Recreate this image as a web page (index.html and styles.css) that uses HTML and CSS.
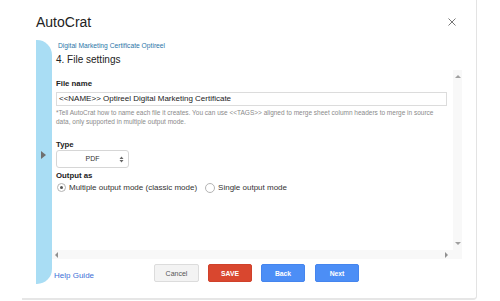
FILE: index.html
```html
<!DOCTYPE html>
<html>
<head>
<meta charset="utf-8">
<link rel="stylesheet" href="styles.css">
</head>
<body>
<div class="dialog">
  <header class="top">
    <h1 class="title">AutoCrat</h1>
    <svg class="close" width="8" height="8" viewBox="0 0 8 8"><path d="M0.5 0.5L7.5 7.5M7.5 0.5L0.5 7.5" stroke="#777" stroke-width="1"/></svg>
  </header>
  <div class="body">
    <aside class="rail"><span class="rail-arrow"></span></aside>
    <main class="panel">
      <div class="crumb">Digital Marketing Certificate Optireel</div>
      <h2 class="step">4. File settings</h2>
      <div class="scroller">
        <div class="scroll-row">
          <div class="content">
            <div class="label">File name</div>
            <div class="input">&lt;&lt;NAME&gt;&gt; Optireel Digital Marketing Certificate</div>
            <p class="help">*Tell AutoCrat how to name each file it creates. You can use &lt;&lt;TAGS&gt;&gt; aligned to merge sheet column headers to merge in source data, only supported in multiple output mode.</p>
            <div class="label label-type">Type</div>
            <div class="select"><span class="select-val">PDF</span><svg class="select-arrows" width="5" height="7" viewBox="0 0 5 7"><path d="M0.5 3L2.5 0.5L4.5 3Z M0.5 4L2.5 6.5L4.5 4Z" fill="#666"/></svg></div>
            <div class="label label-out">Output as</div>
            <div class="radios">
              <span class="radio checked"></span><span class="radio-text">Multiple output mode (classic mode)</span>
              <span class="radio second"></span><span class="radio-text">Single output mode</span>
            </div>
          </div>
          <div class="vbar"><span class="tri-up"></span><span class="tri-down"></span></div>
        </div>
        <div class="hbar-row">
          <div class="hbar"><span class="tri-left"></span><span class="tri-right"></span></div>
          <div class="corner"></div>
        </div>
      </div>
      <footer class="foot">
        <a class="help-link">Help Guide</a>
        <div class="buttons">
          <button class="btn btn-cancel">Cancel</button>
          <button class="btn btn-save">SAVE</button>
          <button class="btn btn-blue">Back</button>
          <button class="btn btn-blue btn-next">Next</button>
        </div>
      </footer>
    </main>
  </div>
</div>
</body>
</html>
```

FILE: styles.css
```css
html, body {
  margin: 0;
  padding: 0;
  background: #fff;
  overflow: hidden;
}
body {
  width: 500px;
  height: 301px;
  font-family: "Liberation Sans", Arial, sans-serif;
  color: #222;
}
.dialog {
  box-sizing: border-box;
  margin-left: 22px;
  width: 455px;
  height: 300px;
  padding-left: 14px;
  border-right: 1px solid #e3e3e3;
  border-bottom: 2px solid #e6e6e6;
  border-bottom-right-radius: 4px;
}
.top {
  box-sizing: border-box;
  height: 40px;
  padding-top: 14px;
  padding-right: 20px;
  display: flex;
  justify-content: space-between;
  align-items: flex-start;
}
.title {
  margin: 0;
  font-size: 14px;
  line-height: 16px;
  font-weight: normal;
  color: #222;
}
.close {
  margin-top: 4px;
}
.body {
  display: flex;
}
.rail {
  width: 16px;
  height: 244px;
  background: #a9ddf4;
  border-radius: 0 15px 15px 0;
  flex: none;
}
.rail-arrow {
  display: block;
  margin: 111px 0 0 5px;
  width: 0;
  height: 0;
  border-top: 4px solid transparent;
  border-bottom: 4px solid transparent;
  border-left: 5px solid #6f6f6f;
}
.panel {
  width: 410px;
  flex: none;
}
.crumb {
  padding-left: 6px;
  font-size: 6.7px;
  line-height: 11px;
  color: #2b76a8;
}
.step {
  margin: 3px 0 4px;
  padding-left: 4px;
  font-size: 10px;
  line-height: 12px;
  font-weight: normal;
  color: #222;
}
.scroller {
  height: 189px;
  display: flex;
  flex-direction: column;
}
.scroll-row {
  display: flex;
  height: 180px;
}
.content {
  flex: 1;
  padding: 9px 0 0 4px;
  overflow: hidden;
}
.label {
  font-size: 7.8px;
  line-height: 10px;
  font-weight: bold;
  color: #222;
}
.input {
  box-sizing: border-box;
  margin-top: 3px;
  width: 391px;
  height: 14px;
  border: 1px solid #dcdcdc;
  padding-left: 2px;
  font-size: 8px;
  line-height: 12px;
  color: #222;
}
.help {
  margin: 2px 0 0;
  width: 390px;
  font-size: 6.5px;
  line-height: 9.4px;
  color: #8a8a8a;
}
.label-type {
  margin-top: 13px;
}
.select {
  box-sizing: border-box;
  width: 73px;
  height: 18px;
  border: 1px solid #d6d6d6;
  border-radius: 3px;
  display: flex;
  align-items: center;
  position: relative;
}
.select-val {
  flex: 1;
  text-align: center;
  font-size: 7px;
  color: #333;
}
.select-arrows {
  position: absolute;
  right: 4px;
  top: 5px;
}
.label-out {
  margin-top: 3px;
}
.radios {
  margin-top: 1px;
  display: flex;
  align-items: center;
  height: 12px;
  font-size: 8px;
  color: #333;
}
.radio {
  box-sizing: border-box;
  width: 9px;
  height: 9px;
  border: 1px solid #b4b4b4;
  border-radius: 50%;
  margin-left: 1px;
  margin-right: 3px;
  display: flex;
  align-items: center;
  justify-content: center;
  flex: none;
}
.radio.checked::after {
  content: "";
  width: 3px;
  height: 3px;
  border-radius: 50%;
  background: #555;
}
.radio.second {
  width: 10px;
  height: 10px;
  margin-left: 8px;
}
.vbar {
  width: 9px;
  background: #f8f8f8;
  display: flex;
  flex-direction: column;
  justify-content: space-between;
  align-items: center;
  padding: 5px 0 5px;
  box-sizing: border-box;
}
.tri-up {
  width: 0; height: 0;
  border-left: 3px solid transparent;
  border-right: 3px solid transparent;
  border-bottom: 3px solid #a0a0a0;
}
.tri-down {
  width: 0; height: 0;
  border-left: 3px solid transparent;
  border-right: 3px solid transparent;
  border-top: 3px solid #a0a0a0;
}
.hbar-row {
  display: flex;
  height: 9px;
}
.hbar {
  flex: 1;
  background: #f8f8f8;
  display: flex;
  justify-content: space-between;
  align-items: center;
  padding: 0 5px 0 3px;
}
.corner {
  width: 9px;
  background: #f8f8f8;
}
.tri-left {
  width: 0; height: 0;
  border-top: 3px solid transparent;
  border-bottom: 3px solid transparent;
  border-right: 3px solid #909090;
}
.tri-right {
  width: 0; height: 0;
  border-top: 3px solid transparent;
  border-bottom: 3px solid transparent;
  border-left: 3px solid #909090;
}
.foot {
  display: flex;
  padding-top: 5px;
}
.help-link {
  width: 100px;
  padding: 7px 0 0 2px;
  font-size: 8px;
  line-height: 10px;
  color: #3d6fd6;
}
.buttons {
  display: flex;
  gap: 9px;
}
.btn {
  box-sizing: border-box;
  width: 44px;
  height: 18px;
  padding: 0;
  border-radius: 2px;
  font-family: "Liberation Sans", Arial, sans-serif;
  font-size: 6.8px;
  font-weight: bold;
  color: #fff;
  border: 1px solid transparent;
}
.btn-cancel {
  width: 45px;
  background: #f3f3f3;
  border-color: #dcdcdc;
  color: #555;
  font-weight: normal;
  font-size: 7px;
}
.btn-save {
  background: #d9472f;
  border-color: #d0412b;
}
.btn-blue {
  background: #4c8ef6;
  border-color: #4585ee;
}
.btn-next {
  margin-left: 1px;
}
```
